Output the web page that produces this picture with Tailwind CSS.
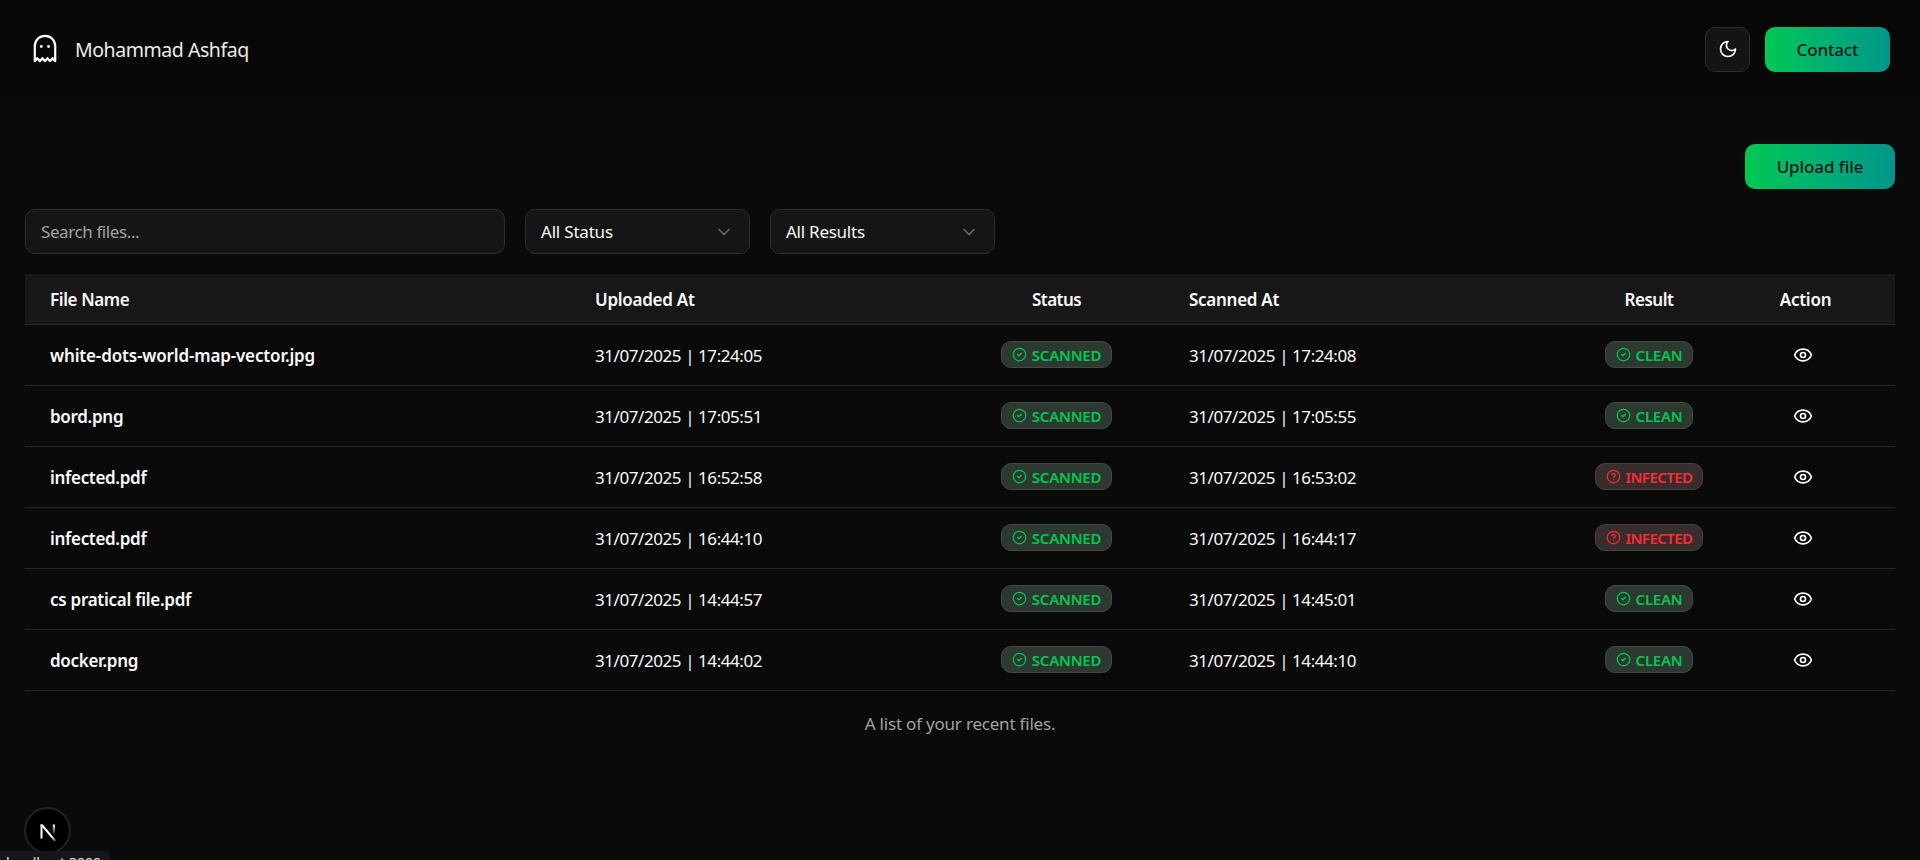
<!DOCTYPE html>
<html lang="en">
<head>
<meta charset="utf-8">
<title>Files</title>
<script src="https://cdn.jsdelivr.net/npm/@tailwindcss/browser@4"></script>
</head>
<body class="relative h-[860px] overflow-hidden bg-[#0a0a0a] text-[17px] text-[#fafafa] font-['Noto_Sans','Open_Sans',sans-serif]">
<svg class="hidden">
  <symbol id="check" viewBox="0 0 24 24"><path d="M12 2a10 10 0 1 0 0 20 10 10 0 1 0 0-20z"/><path d="m9 12 2 2 4-4"/></symbol>
  <symbol id="help" viewBox="0 0 24 24"><circle cx="12" cy="12" r="10"/><path d="M9.09 9a3 3 0 0 1 5.83 1c0 2-3 3-3 3"/><path d="M12 17h.01"/></symbol>
  <symbol id="eye" viewBox="0 0 24 24"><path d="M2.062 12.348a1 1 0 0 1 0-.696 10.750 10.750 0 0 1 19.876 0 1 1 0 0 1 0 .696 10.750 10.750 0 0 1-19.876 0"/><circle cx="12" cy="12" r="3"/></symbol>
  <symbol id="chev" viewBox="0 0 24 24"><path d="m6 9 6 6 6-6"/></symbol>
</svg>

<header class="flex h-[98px] items-center justify-between bg-[#080808] px-[30px]">
  <div class="flex items-center gap-[15px]">
    <svg class="size-[30px]" viewBox="0 0 30 30" fill="none" stroke="#fff" stroke-width="2.200" stroke-linejoin="round" stroke-linecap="round"><path d="M4.800 27.200V12a10.200 10.200 0 0 1 20.400 0v15.200l-2.500-3-2.600 3-2.500-3-2.600 3-2.600-3-2.500 3-2.600-3z"/><g fill="#fff" stroke="none"><circle cx="11.300" cy="12.500" r="1.400"/><circle cx="18.500" cy="12.500" r="1.400"/></g></svg>
    <span class="whitespace-nowrap pt-[2px] text-[19.500px] tracking-[-0.450px] text-[#ebebeb]">Mohammad Ashfaq</span>
  </div>
  <div class="flex items-center gap-[15px]">
    <button class="flex size-[45px] items-center justify-center rounded-[10px] border border-[#2c2c2c] bg-[#141414]">
      <svg class="size-5" viewBox="0 0 24 24" fill="none" stroke="#fff" stroke-width="2" stroke-linecap="round" stroke-linejoin="round"><path d="M12 3a6 6 0 0 0 9 9 9 9 0 1 1-9-9Z"/></svg>
    </button>
    <button class="flex h-[45px] w-[125px] items-center justify-center rounded-[10px] bg-linear-to-r from-[#00c951] to-[#009689] pt-0.5 font-medium tracking-[-0.150px] text-[#171717]">Contact</button>
  </div>
</header>

<main class="px-[25px] pt-[46px]">
  <div class="flex justify-end">
    <button class="flex h-[45px] w-[150px] items-center justify-center rounded-[10px] bg-linear-to-r from-[#00c951] to-[#009689] pt-px font-medium tracking-[-0.100px] text-[#171717]">Upload file</button>
  </div>
  <div class="mt-5 flex gap-5">
    <div class="flex h-[45px] w-[480px] items-center rounded-[10px] border border-[#2e2e2e] bg-[#151515] px-[15px] pt-px tracking-[-0.400px] text-[#a1a1a1]">Search files...</div>
    <div class="flex h-[45px] w-[225px] items-center justify-between rounded-[10px] border border-[#2e2e2e] bg-[#151515] px-[15px]"><span class="pt-px tracking-[-0.200px]">All Status</span><svg class="size-5" fill="none" stroke="#6b6b6b" stroke-width="2" stroke-linecap="round" stroke-linejoin="round"><use href="#chev"/></svg></div>
    <div class="flex h-[45px] w-[225px] items-center justify-between rounded-[10px] border border-[#2e2e2e] bg-[#151515] px-[15px]"><span class="pt-px tracking-[-0.250px]">All Results</span><svg class="size-5" fill="none" stroke="#6b6b6b" stroke-width="2" stroke-linecap="round" stroke-linejoin="round"><use href="#chev"/></svg></div>
  </div>

  <div class="mt-5">
    <div class="grid h-[51px] grid-cols-[545px_379px_215px_418px_134px_179px] items-center border-b border-[#262626] bg-[#171717] pt-px font-semibold">
      <div class="pl-[25px] tracking-[-0.400px]">File Name</div>
      <div class="pl-[25px] tracking-[-0.270px]">Uploaded At</div>
      <div class="text-center tracking-[-0.550px]">Status</div>
      <div class="pl-[25px] tracking-[-0.270px]">Scanned At</div>
      <div class="text-center tracking-[-0.450px]">Result</div>
      <div class="text-center tracking-[-0.250px]">Action</div>
    </div>
    <div id="rows"></div>
    <p class="mt-[20px] text-center tracking-[-0.200px] text-[#a1a1a1]">A list of your recent files.</p>
  </div>
</main>

<div class="absolute left-[24px] top-[807px] flex size-[47px] items-center justify-center rounded-full border-2 border-[#222] bg-black">
  <svg class="size-[20px]" viewBox="0 0 20 20">
    <defs>
      <linearGradient id="fade" x1="0" y1="0" x2="0" y2="1"><stop offset="0" stop-color="#fff"/><stop offset="1" stop-color="#fff" stop-opacity="0"/></linearGradient>
      <linearGradient id="diag" x1="0" y1="0" x2="1" y2="1"><stop offset=".7" stop-color="#fff"/><stop offset="1" stop-color="#fff" stop-opacity=".3"/></linearGradient>
    </defs>
    <path d="M2.500 3.500h2v14h-2z" fill="#fff"/><path d="M2.500 3.500h2.400L18 19.300l-1.600 1.200L2.500 4z" fill="url(#diag)"/><path d="M14.800 3.500h2.200v10.500h-2.200z" fill="url(#fade)"/>
  </svg>
</div>
<div class="absolute bottom-0 left-0 h-[9px] w-[110px] overflow-hidden rounded-tr-[5px] bg-[#15161b] pl-[6px] pt-[2px] text-[14px] leading-[20px] text-[#e3e3e3]">localhost:3000</div>

<script>
const data = [
  ["white-dots-world-map-vector.jpg", "17:24:05", "17:24:08", 1, "tracking-[-0.150px]"],
  ["bord.png", "17:05:51", "17:05:55", 1, "tracking-[-0.300px]"],
  ["infected.pdf", "16:52:58", "16:53:02", 0, "tracking-[-0.320px]"],
  ["infected.pdf", "16:44:10", "16:44:17", 0, "tracking-[-0.320px]"],
  ["cs pratical file.pdf", "14:44:57", "14:45:01", 1, "tracking-[-0.270px]"],
  ["docker.png", "14:44:02", "14:44:10", 1, "tracking-[-0.300px]"],
];
const good = t => `<div class="inline-flex h-[27px] items-center gap-[5px] rounded-[10px] border border-[#3f4b42] bg-[#2c3830] px-[10px] text-[15px] font-semibold tracking-[-0.250px] text-[#00c951]"><svg class="size-[15px]" fill="none" stroke="currentColor" stroke-width="2" stroke-linecap="round" stroke-linejoin="round"><use href="#check"/></svg><span class="pt-px">${t}</span></div>`;
const bad = t => `<div class="inline-flex h-[27px] items-center gap-[5px] rounded-[10px] border border-[#4b4140] bg-[#382d2d] px-[10px] text-[15px] font-semibold tracking-[-0.550px] text-[#fb2c36]"><svg class="size-[15px]" fill="none" stroke="currentColor" stroke-width="2" stroke-linecap="round" stroke-linejoin="round"><use href="#help"/></svg><span class="pt-px">${t}</span></div>`;
document.getElementById("rows").innerHTML = data.map(([n, u, s, ok, tr]) => `
<div class="grid h-[61px] grid-cols-[545px_379px_215px_418px_134px_179px] items-center border-b border-[#262626]">
  <div class="pl-[25px] pt-px font-semibold ${tr}">${n}</div>
  <div class="pl-[25px] pt-px tracking-[-0.430px]">31/07/2025 | ${u}</div>
  <div class="flex justify-center pb-px">${good("SCANNED")}</div>
  <div class="pl-[25px] pt-px tracking-[-0.430px]">31/07/2025 | ${s}</div>
  <div class="flex justify-center pb-px">${ok ? good("CLEAN") : bad("INFECTED")}</div>
  <div class="flex justify-center pr-[5px]"><svg class="size-5" fill="none" stroke="#fff" stroke-width="2" stroke-linecap="round" stroke-linejoin="round"><use href="#eye"/></svg></div>
</div>`).join("");
</script>
</body>
</html>
